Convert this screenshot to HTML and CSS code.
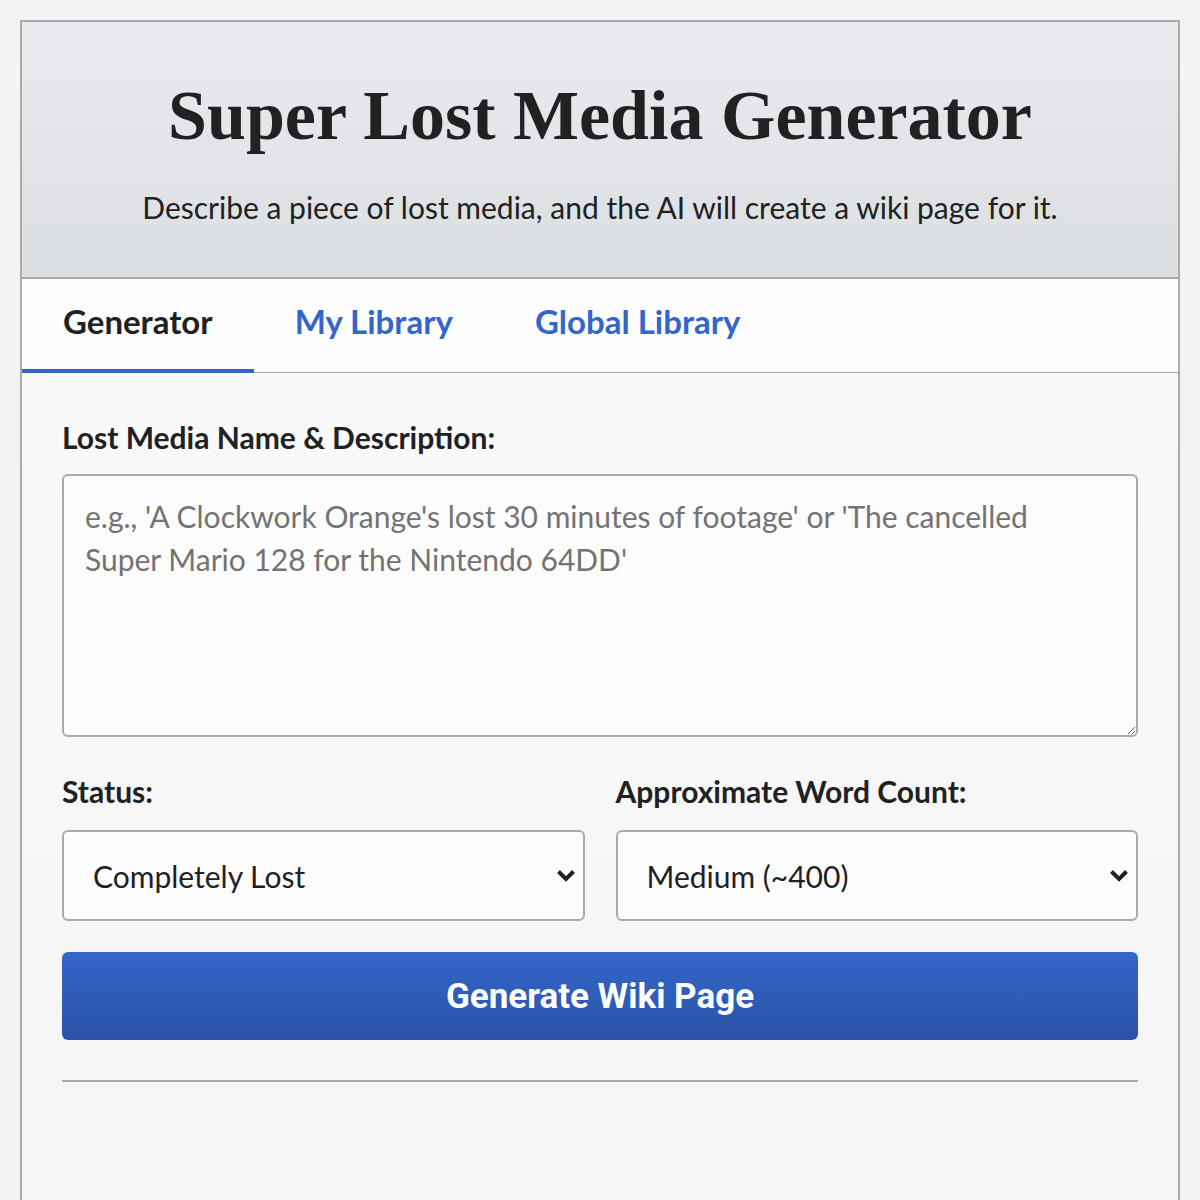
FILE: index.html
```html
<!DOCTYPE html>
<html lang="en">
<head>
<meta charset="utf-8">
<title>Super Lost Media Generator</title>
<link rel="stylesheet" href="styles.css">
</head>
<body>
<div class="app">
  <header class="hero">
    <h1 class="title">Super Lost Media Generator</h1>
    <p class="subtitle">Describe a piece of lost media, and the AI will create a wiki page for it.</p>
  </header>
  <nav class="tabs">
    <a class="tab active">Generator</a>
    <a class="tab">My Library</a>
    <a class="tab">Global Library</a>
  </nav>
  <main class="content">
    <label class="label" for="desc">Lost Media Name &amp; Description:</label>
    <textarea id="desc" class="desc" placeholder="e.g., 'A Clockwork Orange's lost 30 minutes of footage' or 'The cancelled Super Mario 128 for the Nintendo 64DD'"></textarea>
    <div class="row">
      <div class="field">
        <label class="label" for="status">Status:</label>
        <select id="status" class="select">
          <option>Completely Lost</option>
        </select>
      </div>
      <div class="field">
        <label class="label" for="count">Approximate Word Count:</label>
        <select id="count" class="select">
          <option>Medium (~400)</option>
        </select>
      </div>
    </div>
    <button class="generate">Generate Wiki Page</button>
    <hr class="divider">
  </main>
</div>
</body>
</html>
```
FILE: styles.css
```css
html, body {
  margin: 0;
  padding: 0;
}
body {
  background: #f3f3f3;
  font-family: "Source Sans Pro", Lato, "Noto Sans", sans-serif;
  color: #202122;
  padding: 20px 20px 0 20px;
}
.app {
  border: 2px solid #a7abb0;
  border-bottom: none;
  background: linear-gradient(#fbfbfb, #f4f4f4);
  min-height: 1300px;
}
.hero {
  background: linear-gradient(#e9eaed, #dcdfe2);
  border-bottom: 2px solid #a7abb0;
  text-align: center;
  padding: 56px 20px 52px;
}
.title {
  font-family: "Liberation Serif", "Times New Roman", serif;
  font-weight: bold;
  font-size: 70px;
  line-height: 76px;
  margin: 0;
  color: #202122;
}
.subtitle {
  font-size: 30px;
  line-height: 36px;
  margin: 35px 0 0;
  color: #202122;
}
.tabs {
  display: flex;
  background: #fdfdfd;
  border-bottom: 1px solid #a7abb0;
}
.tab {
  font-size: 33px;
  font-weight: bold;
  color: #3366cc;
  padding: 23px 41px 28px;
  line-height: 39px;
  border-bottom: 4px solid transparent;
  margin-bottom: -1px;
}
.tab.active {
  color: #202122;
  border-bottom-color: #3366cc;
}
.content {
  padding: 46px 40px 40px;
}
.label {
  display: block;
  font-size: 30px;
  font-weight: bold;
  line-height: 36px;
  margin-bottom: 19px;
}
.desc {
  display: block;
  box-sizing: border-box;
  width: 100%;
  height: 263px;
  border: 2px solid #a7abb0;
  border-radius: 6px;
  background: #fcfcfc;
  padding: 19px 60px 20px 21px;
  font-family: inherit;
  font-size: 30px;
  line-height: 43px;
  color: #202122;
  resize: vertical;
}
.desc::placeholder {
  color: #737373;
}
.row {
  display: grid;
  grid-template-columns: 1fr 1fr;
  gap: 31px;
  margin-top: 36px;
}
.select {
  display: block;
  box-sizing: border-box;
  width: 100%;
  height: 91px;
  margin-top: 21px;
  border: 2px solid #a7abb0;
  border-radius: 6px;
  background: #fdfdfd url("data:image/svg+xml,%3Csvg xmlns='http://www.w3.org/2000/svg' width='20' height='13' viewBox='0 0 20 13'%3E%3Cpath d='M2.5 2.5l7.5 7.5 7.5-7.5' fill='none' stroke='%23202122' stroke-width='4'/%3E%3C/svg%3E") no-repeat right 7px center;
  appearance: none;
  -webkit-appearance: none;
  padding: 0 40px 0 29px;
  font-family: inherit;
  font-size: 30px;
  color: #202122;
}
.field .label {
  margin-bottom: 0;
}
.generate {
  display: block;
  width: 100%;
  margin-top: 31px;
  height: 88px;
  border: none;
  border-radius: 6px;
  background: linear-gradient(#3467ca, #2a52a6);
  color: #ffffff;
  font-family: Roboto, sans-serif;
  font-weight: bold;
  font-size: 35px;
}
.divider {
  border: none;
  border-top: 2px solid #a9a9a9;
  margin: 40px 0 0;
}
```
